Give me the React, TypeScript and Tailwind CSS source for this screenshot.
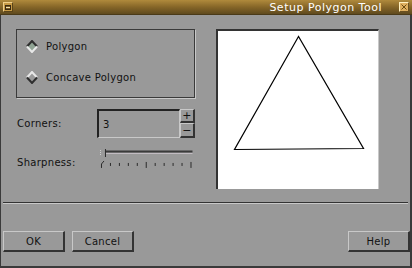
import React from "react";

const font = { fontFamily: '"DejaVu Sans", "Liberation Sans", sans-serif' };

function Diamond({ selected }: { selected: boolean }) {
  const dark = "#2e2e2e";
  const light = "#e8e8e8";
  const up = selected ? dark : light;
  const down = selected ? light : dark;
  return (
    <svg width="12" height="13" viewBox="0 0 12 13" className="shrink-0">
      <polygon points="6,1 11,6.5 6,12 1,6.5" fill={selected ? "#8fa393" : "#9a9a9a"} />
      <polyline points="1,6.5 6,1 11,6.5" fill="none" stroke={up} strokeWidth="2" />
      <polyline points="1,6.5 6,12 11,6.5" fill="none" stroke={down} strokeWidth="2" />
    </svg>
  );
}

function Slider() {
  const ticks = [0, 1, 2, 3, 4, 5, 6, 7, 8, 9, 10];
  return (
    <svg width="96" height="20" viewBox="0 0 96 20" className="block">
      <line x1="0.5" y1="1" x2="0.5" y2="6" stroke="#d0d0d0" strokeDasharray="1 1" />
      <line x1="5" y1="2.5" x2="93" y2="2.5" stroke="#3a3a3a" strokeWidth="2" />
      <line x1="6" y1="4.5" x2="93" y2="4.5" stroke="#c4bcc4" />
      <line x1="5.5" y1="0" x2="5.5" y2="8" stroke="#2a2a2a" />
      <line x1="1.5" y1="19" x2="1.5" y2="15" stroke="#2a2a2a" />
      <line x1="1.5" y1="15" x2="4" y2="12" stroke="#2a2a2a" />
      {ticks.slice(1).map((i) => {
        const x = 1.5 + i * 9;
        const tall = i % 5 === 0;
        return <line key={i} x1={x} y1={tall ? 13 : 14} x2={x} y2={tall ? 19 : 17} stroke="#2a2a2a" />;
      })}
    </svg>
  );
}

function Btn({ label, w }: { label: string; w: string }) {
  return (
    <div
      className={`${w} h-[21px] flex items-center justify-center text-[10px] text-[#111] tracking-[0.3px] border-t border-l border-t-[#c8c8c8] border-l-[#c8c8c8] border-b-2 border-r-2 border-b-[#333] border-r-[#333]`}
    >
      {label}
    </div>
  );
}

export default function App() {
  return (
    <div className="w-[412px] h-[268px] bg-[#999999] flex flex-col overflow-hidden" style={font}>
      {/* Title bar */}
      <div className="h-[15px] flex items-center bg-gradient-to-b from-[#b08a3c] via-[#866628] to-[#5f4a1e] border-b border-[#4a3a18] shrink-0">
        <div className="ml-[3px] w-[10px] h-[10px] bg-[#c79a45] border border-[#f0d08a] border-r-[#5a4418] border-b-[#5a4418] flex items-center justify-center">
          <div className="w-[6px] h-[5px] border border-[#3a2a10] bg-[#7a5a24] flex items-center justify-center">
            <div className="w-[4px] h-[1px] bg-[#f4e4b0]" />
          </div>
        </div>
        <div className="flex-1" />
        <div className="text-white text-[11px] leading-none tracking-[0.5px] mr-[17px]">Setup Polygon Tool</div>
        <div className="mr-[3px] w-[10px] h-[10px] bg-[#e0b060] border border-[#fff0c0] border-r-[#6a5020] border-b-[#6a5020] flex items-center justify-center">
          <svg width="6" height="6" viewBox="0 0 6 6">
            <path d="M0.5 0.5 L5.5 5.5 M5.5 0.5 L0.5 5.5" stroke="#6a4a10" strokeWidth="1" />
          </svg>
        </div>
      </div>

      {/* Body */}
      <div className="flex-1 flex flex-col border-l border-r-2 border-b-2 border-[#3a3a3a]">
        <div className="flex pt-[14px] pl-[15px] gap-[21px]">
          {/* Left column */}
          <div className="w-[179px] flex flex-col">
            <div className="h-[69px] border border-[#3a3a3a] shadow-[1px_1px_0_#c8c8c8] flex flex-col pl-[9px] text-[10px] text-[#111] tracking-[0.3px]">
              <div className="flex items-center gap-[8px] mt-[10px] h-[13px]">
                <Diamond selected />
                <span>Polygon</span>
              </div>
              <div className="flex items-center gap-[8px] mt-[18px] h-[13px]">
                <Diamond selected={false} />
                <span>Concave Polygon</span>
              </div>
            </div>

            <div className="flex items-center mt-[11px] h-[29px] text-[10px] text-[#111] tracking-[0.3px]">
              <div className="w-[81px] pl-[1px]">Corners:</div>
              <div className="w-[83px] h-[29px] flex items-center pl-[4px] border-t-2 border-l-2 border-[#222] border-b border-r border-b-[#c8c8c8] border-r-[#c8c8c8]">
                3
              </div>
              <div className="flex flex-col w-[15px] h-[29px]">
                <div className="h-[14px] flex items-center justify-center border-t border-l border-[#c8c8c8] border-b-2 border-r-2 border-b-[#333] border-r-[#333] text-[11px] leading-none">
                  +
                </div>
                <div className="h-[15px] flex items-center justify-center border-t border-l border-[#c8c8c8] border-b-2 border-r-2 border-b-[#333] border-r-[#333] text-[11px] leading-none">
                  −
                </div>
              </div>
            </div>

            <div className="flex items-end mt-[11px] h-[20px] text-[10px] text-[#111] tracking-[0.3px]">
              <div className="w-[84px] pl-[1px] leading-none pb-[1px]">Sharpness:</div>
              <Slider />
            </div>
          </div>

          {/* Preview */}
          <div className="w-[163px] h-[160px] bg-white border-t-2 border-l-2 border-[#333] border-r border-r-[#c8c8c8]">
            <svg width="161" height="158" viewBox="0 0 161 158" className="block">
              <polygon points="80.5,5.5 16.5,118.5 145.5,117.5" fill="none" stroke="#000" strokeWidth="1.2" />
            </svg>
          </div>
        </div>

        {/* Separator */}
        <div className="mt-[13px] mx-[2px] h-[2px] border-t border-[#333] border-b border-b-[#c8c8c8]" />

        {/* Buttons */}
        <div className="flex mt-[27px] pl-[2px] gap-[7px]">
          <Btn label="OK" w="w-[62px]" />
          <Btn label="Cancel" w="w-[62px]" />
          <div className="flex-1" />
          <Btn label="Help" w="w-[62px]" />
        </div>
      </div>
    </div>
  );
}
